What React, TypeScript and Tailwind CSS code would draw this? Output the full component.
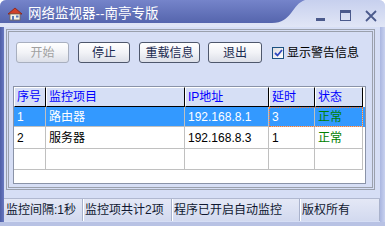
import React from "react";

const font = { fontFamily: '"Liberation Sans", "Noto Sans CJK SC", sans-serif' };

const HouseIcon = () => (
  <svg width="16" height="14" viewBox="0 0 16 14">
    <path d="M1 7 L8 1 L15 7 Z" fill="#d0402a" stroke="#8a2010" strokeWidth="0.8" />
    <rect x="3" y="7" width="10" height="6" fill="#f4f1e8" stroke="#7a6a50" strokeWidth="0.8" />
    <rect x="5" y="9" width="2" height="4" fill="#5a7ab8" />
    <rect x="9" y="8.5" width="2.5" height="2" fill="#5a7ab8" />
  </svg>
);

const TitleBar = () => (
  <div className="relative h-[27px] shrink-0 bg-gradient-to-b from-[#c7d0ee] to-[#e1e6f6]">
    <svg className="absolute left-0 top-0" width="385" height="27" viewBox="0 0 385 27">
      <defs>
        <linearGradient id="tb" x1="0" y1="0" x2="0" y2="1">
          <stop offset="0" stopColor="#7584ca" />
          <stop offset="1" stopColor="#5565ad" />
        </linearGradient>
      </defs>
      <path d="M0 0 H305 C292 4 292 23 272 23 H0 Z" fill="url(#tb)" />
    </svg>
    <div className="relative flex items-center h-[27px] pl-[7px]">
      <HouseIcon />
      <span className="ml-[5px] text-[13.5px] text-white leading-none">网络监视器--南亭专版</span>
    </div>
    <div className="absolute top-[18px] left-[316px] w-[9px] h-[3px] bg-[#4b5a8c]" />
    <div className="absolute top-[10px] left-[340px] w-[11px] h-[11px] border border-[#4b5a8c] border-t-[3px]" />
    <svg className="absolute top-[10px] left-[365px]" width="12" height="12" viewBox="0 0 12 12">
      <path d="M1 1 L11 11 M11 1 L1 11" stroke="#4b5a8c" strokeWidth="1.8" />
    </svg>
  </div>
);

const Button = ({ label, disabled, w }: { label: string; disabled?: boolean; w: string }) => (
  <div
    className={`${w} h-[21px] flex items-center justify-center rounded-[3px] border ${disabled ? "border-[#a8afbf] text-[#a0a0a0]" : "border-[#4e576c] text-[#1a2a50]"} bg-gradient-to-b from-[#ffffff] via-[#f2f3f7] to-[#dcdfe8] text-[12px] leading-none`}
  >
    {label}
  </div>
);

const cols = "grid grid-cols-[32px_139px_84px_46px_48px]";

const Header = () => (
  <div className={`${cols} h-[20px] text-[12px] text-[#0000ff]`}>
    {["序号", "监控项目", "IP地址", "延时", "状态"].map((h) => (
      <div key={h} className="flex items-center pl-[2px] bg-[#d6dff5] border-t border-l border-t-white border-l-white border-r border-b border-r-black border-b-black">
        {h}
      </div>
    ))}
  </div>
);

const rows = [
  { id: "1", name: "路由器", ip: "192.168.8.1", delay: "3", state: "正常", sel: true },
  { id: "2", name: "服务器", ip: "192.168.8.3", delay: "1", state: "正常", sel: false },
];

const Cell = ({ children, className = "" }: { children?: React.ReactNode; className?: string }) => (
  <div className={`flex items-center pl-[3px] border-r border-b border-[#c0c0c0] ${className}`}>{children}</div>
);

const StatusPanel = ({ label, w }: { label: string; w: string }) => (
  <div className={`${w} h-full flex items-center pl-[2px] border-r border-r-[#a9b2cc] shadow-[1px_0_0_#ffffff] text-[12px] text-[#101830]`}>{label}</div>
);

export default function App() {
  return (
    <div className="w-[385px] h-[226px] flex flex-col overflow-hidden rounded-t-[6px] bg-[#d6def5]" style={font}>
      <TitleBar />
      <div className="flex flex-1 min-h-0">
        <div className="w-[4px] bg-gradient-to-r from-[#4e5ea6] to-[#6878c0]" />
        <div className="flex-1 flex flex-col bg-[#d6def5]">
          <div className="mt-[2px] ml-[2px] mr-[5px] h-[161px] border-[3px] border-double border-[#9aa0ac] flex flex-col">
            <div className="flex items-center pt-[10px] pl-[7px]">
              <Button label="开始" disabled w="w-[53px]" />
              <div className="w-[9px]" />
              <Button label="停止" w="w-[52px]" />
              <div className="w-[9px]" />
              <Button label="重载信息" w="w-[61px]" />
              <div className="w-[8px]" />
              <Button label="退出" w="w-[54px]" />
              <div className="ml-[10px] flex items-center">
                <div className="w-[12px] h-[12px] border border-[#1c5180] bg-gradient-to-br from-[#dcdce0] to-[#ffffff] flex items-center justify-center">
                  <svg width="9" height="8" viewBox="0 0 9 8">
                    <path d="M1 4 L3.5 6.5 L8 1" stroke="#3048c0" strokeWidth="1.8" fill="none" />
                  </svg>
                </div>
                <span className="ml-[3px] text-[12px] text-black leading-none">显示警告信息</span>
              </div>
            </div>
            <div className="mt-[23px] ml-[4px] mr-[6px] h-[98px] border border-[#8a93a8] bg-white">
              <Header />
              {rows.map((r) => (
                <div key={r.id} className={`relative ${cols} ${r.id === "1" ? "h-[20px]" : "h-[22px]"} text-[12px] ${r.sel ? "bg-[#3399ff] text-white" : "text-black"}`}>
                  <Cell>{r.id}</Cell>
                  <Cell>{r.name}</Cell>
                  <Cell>{r.ip}</Cell>
                  <Cell>{r.delay}</Cell>
                  <Cell className="text-[#008000]">{r.state}</Cell>
                  {r.sel && (
                    <div className="absolute left-[255px] top-0 w-[94px] h-[20px] border border-dotted border-[#ff7a30]" />
                  )}
                </div>
              ))}
              <div className={`${cols} h-[21px]`}>
                <Cell />
                <Cell />
                <Cell />
                <Cell />
                <Cell />
              </div>
            </div>
          </div>
          <div className="mt-[8px] h-[23px] flex border-t border-[#b0b8d0] bg-gradient-to-b from-[#e4e8f6] to-[#d2d9ef]">
            <StatusPanel label="监控间隔:1秒" w="w-[79px]" />
            <StatusPanel label="监控项共计2项" w="w-[89px]" />
            <StatusPanel label="程序已开启自动监控" w="w-[128px]" />
            <StatusPanel label="版权所有" w="w-[80px]" />
          </div>
        </div>
        <div className="w-[5px] bg-gradient-to-r from-[#aab6e0] to-[#c8d1ef]" />
      </div>
      <div className="h-[4px] bg-[#b8c2e4]" />
    </div>
  );
}
